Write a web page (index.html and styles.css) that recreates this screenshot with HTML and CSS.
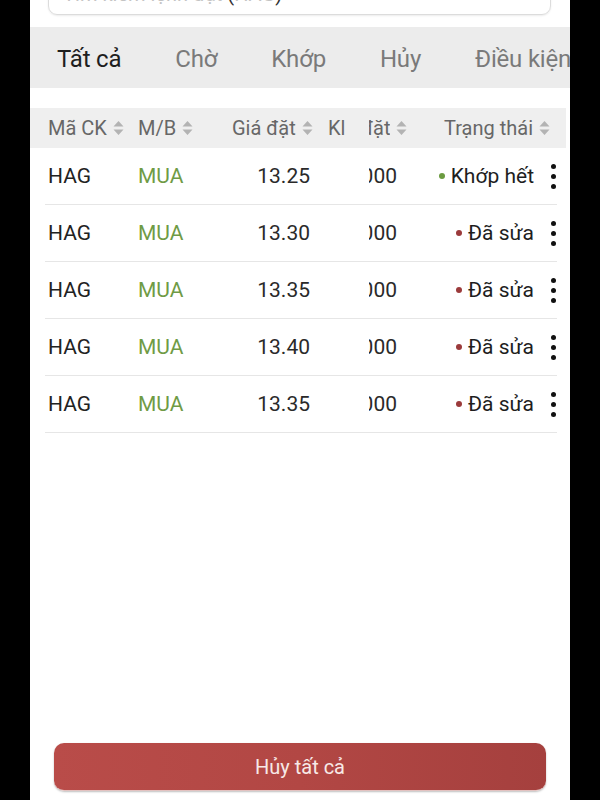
FILE: index.html
```html
<!DOCTYPE html>
<html lang="vi">
<head>
    <meta charset="UTF-8">
    <meta name="viewport" content="width=device-width, initial-scale=1.0">
    <title>Sổ lệnh</title>
    <link rel="stylesheet" href="styles.css">
</head>
<body>

<div class="screen">
    <div class="search">
        <span class="ph">Tìm kiếm lệnh đặt</span> (<span class="ph">HAG</span>)
    </div>

    <div class="tabs">
        <div class="tab active">Tất cả</div>
        <div class="tab">Chờ</div>
        <div class="tab">Khớp</div>
        <div class="tab">Hủy</div>
        <div class="tab">Điều kiện</div>
    </div>

    <div class="thead">
        <div class="th">Mã CK <svg class="sort" viewBox="0 0 10 14"><path d="M5 0L10 5.5H0Z M0 8.5H10L5 14Z"/></svg></div>
        <div class="th">M/B <svg class="sort" viewBox="0 0 10 14"><path d="M5 0L10 5.5H0Z M0 8.5H10L5 14Z"/></svg></div>
        <div class="th">Giá đặt <svg class="sort" viewBox="0 0 10 14"><path d="M5 0L10 5.5H0Z M0 8.5H10L5 14Z"/></svg></div>
        <div class="th th-vol">Kl <span class="clip head-clip"><span>đặt</span></span><svg class="sort" viewBox="0 0 10 14"><path d="M5 0L10 5.5H0Z M0 8.5H10L5 14Z"/></svg></div>
        <div class="th th-status">Trạng thái <svg class="sort" viewBox="0 0 10 14"><path d="M5 0L10 5.5H0Z M0 8.5H10L5 14Z"/></svg></div>
    </div>

    <div class="tbody">
        <div class="row">
            <div class="code">HAG</div>
            <div class="side buy">MUA</div>
            <div class="price">13.25</div>
            <div class="vol"><span class="clip val-clip"><span>1000</span></span></div>
            <div class="status"><span class="dot done"></span>Khớp hết</div>
            <div class="more"><i></i><i></i><i></i></div>
        </div>
        <div class="row">
            <div class="code">HAG</div>
            <div class="side buy">MUA</div>
            <div class="price">13.30</div>
            <div class="vol"><span class="clip val-clip"><span>1000</span></span></div>
            <div class="status"><span class="dot edited"></span>Đã sửa</div>
            <div class="more"><i></i><i></i><i></i></div>
        </div>
        <div class="row">
            <div class="code">HAG</div>
            <div class="side buy">MUA</div>
            <div class="price">13.35</div>
            <div class="vol"><span class="clip val-clip"><span>1000</span></span></div>
            <div class="status"><span class="dot edited"></span>Đã sửa</div>
            <div class="more"><i></i><i></i><i></i></div>
        </div>
        <div class="row">
            <div class="code">HAG</div>
            <div class="side buy">MUA</div>
            <div class="price">13.40</div>
            <div class="vol"><span class="clip val-clip"><span>1000</span></span></div>
            <div class="status"><span class="dot edited"></span>Đã sửa</div>
            <div class="more"><i></i><i></i><i></i></div>
        </div>
        <div class="row">
            <div class="code">HAG</div>
            <div class="side buy">MUA</div>
            <div class="price">13.35</div>
            <div class="vol"><span class="clip val-clip"><span>1000</span></span></div>
            <div class="status"><span class="dot edited"></span>Đã sửa</div>
            <div class="more"><i></i><i></i><i></i></div>
        </div>
    </div>

    <button class="cancel-all">Hủy tất cả</button>
</div>

</body>
</html>
```

FILE: styles.css
```css
* {
    margin: 0;
    padding: 0;
    box-sizing: border-box;
}

body {
    background: #000;
    font-family: Roboto, 'Noto Sans', sans-serif;
    height: 800px;
    overflow: hidden;
}

.screen {
    width: 540px;
    height: 800px;
    margin-left: 30px;
    background: #fff;
    overflow: hidden;
    display: flex;
    flex-direction: column;
}

/* search box, scrolled mostly out of view */
.search {
    height: 45px;
    margin: -30px 19px 0 18px;
    padding: 13px 14px 0;
    border: 1px solid #dcdcdc;
    border-radius: 9px;
    box-shadow: 0 1px 2px rgba(0,0,0,0.08);
    font-size: 20px;
    line-height: 20px;
    color: #333;
    white-space: nowrap;
}

.search .ph {
    color: #c4c4c4;
}

/* tabs */
.tabs {
    display: flex;
    align-items: center;
    height: 61px;
    margin-top: 12px;
    padding-top: 2px;
    background: #ececec;
    white-space: nowrap;
    flex-shrink: 0;
}

.tab {
    padding: 0 27px;
    font-size: 24px;
    letter-spacing: -0.2px;
    color: #7a7a7a;
}

.tab.active {
    color: #1e1e1e;
}

/* table header */
.thead {
    display: grid;
    grid-template-columns: 90px 94px 94px 100px 1fr;
    align-items: center;
    height: 40px;
    margin: 20px 4px 0 0;
    padding: 0 16px 0 18px;
    background: #efefef;
    font-size: 20px;
    color: #676767;
    white-space: nowrap;
    flex-shrink: 0;
}

.th {
    display: flex;
    align-items: center;
}

.th-vol {
    padding-left: 2px;
}

.th-status {
    justify-content: flex-end;
}

.sort {
    width: 11px;
    height: 14px;
    margin-left: 6px;
    fill: #b3b3b3;
}

.clip {
    display: inline-flex;
    justify-content: flex-end;
    overflow: hidden;
    white-space: nowrap;
}

.head-clip {
    width: 21px;
    margin-left: 24px;
}

.val-clip {
    width: 28px;
    margin-left: 43px;
}

/* rows */
.row {
    display: grid;
    grid-template-columns: 90px 94px 94px 100px 1fr 23px;
    align-items: center;
    height: 57px;
    margin: 0 13px 0 15px;
    padding-left: 3px;
    border-bottom: 1px solid #e6e6e6;
    font-size: 21px;
    color: #222;
}

.side.buy {
    color: #6f9b45;
}

.price {
    text-align: right;
    padding-right: 16px;
    color: #2a2a2a;
}

.vol {
    color: #2a2a2a;
}

.status {
    display: flex;
    align-items: center;
    justify-content: flex-end;
    color: #1e1e1e;
}

.dot {
    width: 6px;
    height: 6px;
    border-radius: 50%;
    margin-right: 6px;
}

.dot.done {
    background: #6b9b40;
}

.dot.edited {
    background: #9b3a3b;
}

.more {
    display: flex;
    flex-direction: column;
    align-items: flex-end;
    gap: 5px;
    padding-right: 1px;
}

.more i {
    width: 5px;
    height: 5px;
    border-radius: 50%;
    background: #111;
}

/* bottom button */
.cancel-all {
    margin: auto 24px 9px;
    height: 48px;
    border: none;
    border-bottom: 1px solid #e3c2c0;
    border-radius: 10px;
    background: linear-gradient(90deg, #b94c49 0%, #b24744 50%, #a5403e 100%);
    box-shadow: 0 1px 2px rgba(0,0,0,0.25);
    font-family: Roboto, sans-serif;
    font-size: 20px;
    color: #f7e9e7;
    flex-shrink: 0;
}
```
